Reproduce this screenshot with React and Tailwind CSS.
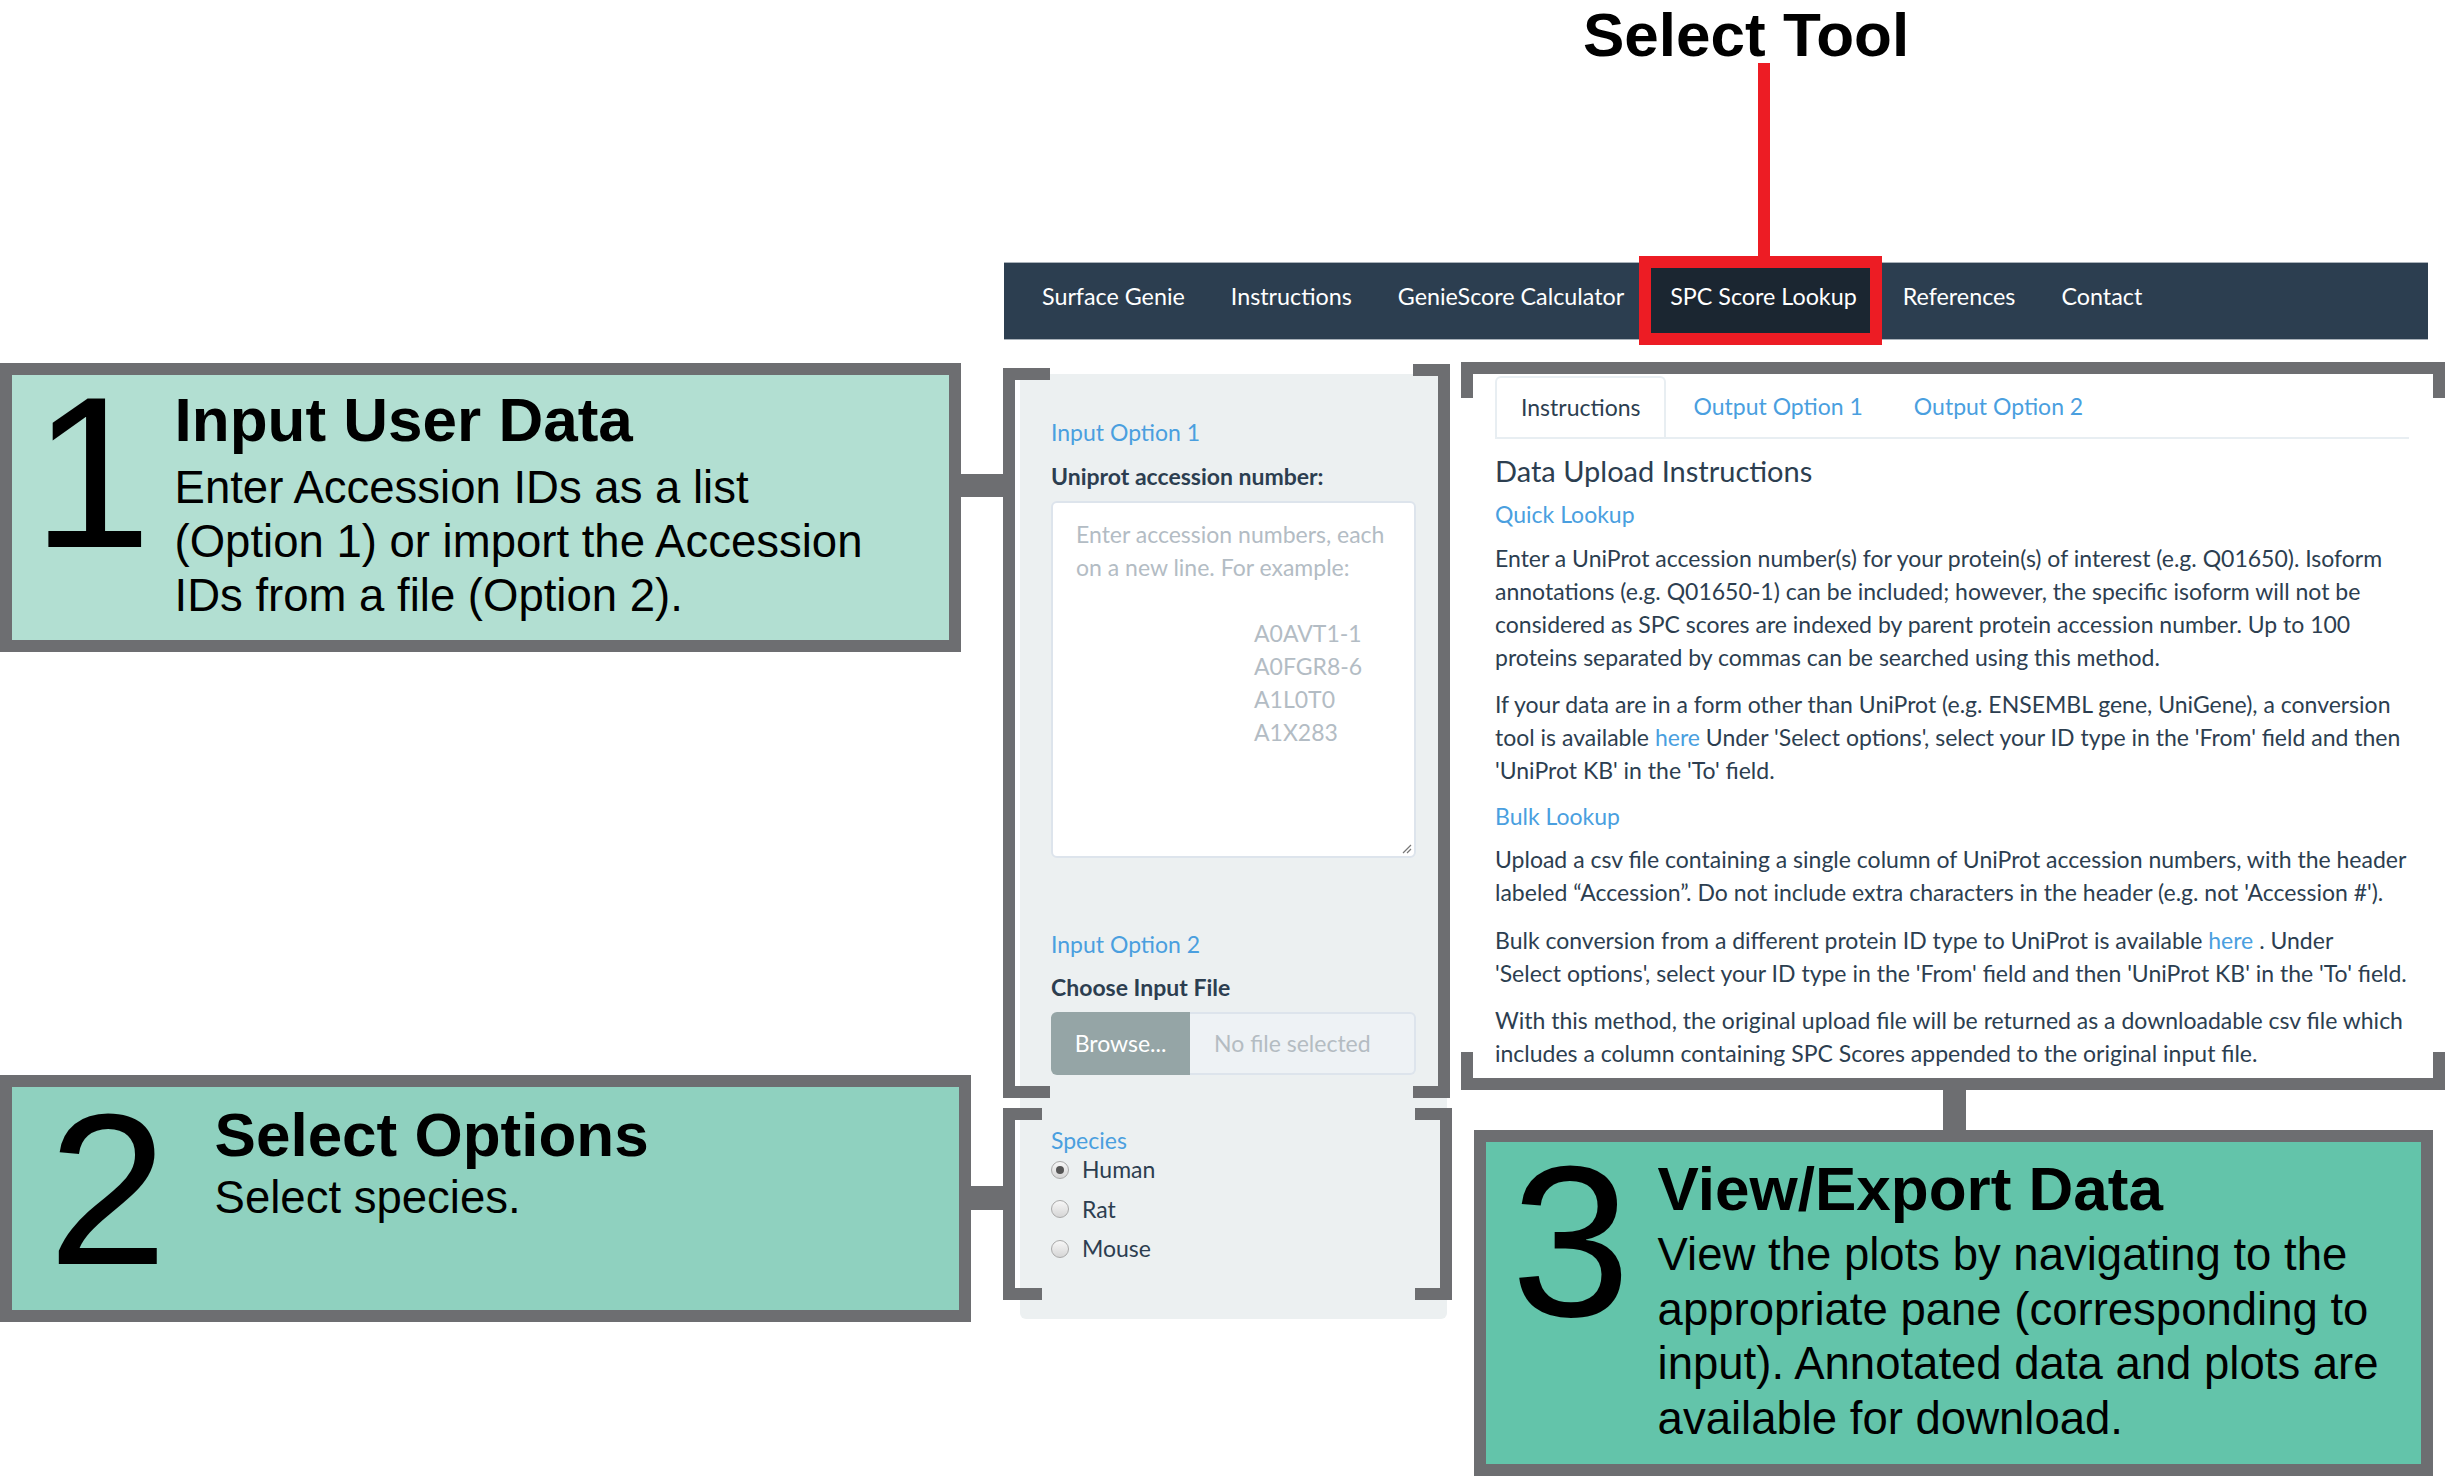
import React from 'react';

// Annotated figure: SPC Score Lookup tool with three callout steps

const navItems = ['Surface Genie', 'Instructions', 'GenieScore Calculator', 'SPC Score Lookup', 'References', 'Contact'];
const examples = ['A0AVT1-1', 'A0FGR8-6', 'A1L0T0', 'A1X283'];

export default function App() {
  return (
    <div className="relative w-[2445px] h-[1476px] overflow-hidden bg-white">
      {/* screenshot of the app */}
      <div className="absolute left-[1004px] top-[262px] w-[1424px] font-['Lato',sans-serif]">
        <Navbar />
        <div className="flex items-start mt-[34px]">
          <Sidebar />
          <MainPanel />
        </div>
      </div>

      {/* annotation layer */}
      <div className="absolute left-[1583px] top-0 text-[62px] leading-[70px] font-bold text-black font-['Liberation_Sans',Arial,sans-serif]">
        Select Tool
      </div>
      <div className="absolute left-[1758px] top-[63px] w-[12px] h-[193px] bg-[#ed1c24]" />
      <div className="absolute left-[1639px] top-[256px] w-[243px] h-[89px] border-[12px] border-[#ed1c24]" />

      {/* brackets */}
      <div className="absolute left-[1003px] top-[368px] w-[47px] h-[730px] border-[12px] border-r-0 border-[#6d6e71]" />
      <div className="absolute left-[1413px] top-[364px] w-[37px] h-[734px] border-[12px] border-l-0 border-[#6d6e71]" />
      <div className="absolute left-[1003px] top-[1108px] w-[39px] h-[192px] border-[12px] border-r-0 border-[#6d6e71]" />
      <div className="absolute left-[1415px] top-[1108px] w-[37px] h-[192px] border-[12px] border-l-0 border-[#6d6e71]" />
      <div className="absolute left-[1461px] top-[362px] w-[984px] h-[36px] border-[12px] border-b-0 border-[#6d6e71]" />
      <div className="absolute left-[1461px] top-[1052px] w-[984px] h-[38px] border-[12px] border-t-0 border-[#6d6e71]" />

      {/* connectors */}
      <div className="absolute left-[961px] top-[474px] w-[42px] h-[23px] bg-[#6d6e71]" />
      <div className="absolute left-[971px] top-[1186px] w-[32px] h-[24px] bg-[#6d6e71]" />
      <div className="absolute left-[1943px] top-[1090px] w-[23px] h-[40px] bg-[#6d6e71]" />

      {/* callouts */}
      <div className="absolute left-0 top-[363px] w-[961px] h-[289px] border-[12px] border-[#6d6e71] bg-[#b2dfd2] flex items-start font-['Liberation_Sans',Arial,sans-serif] text-black">
        <div className="ml-[20px] mt-[-10px] text-[215px] leading-none">1</div>
        <div className="ml-[23px] mt-[14px]">
          <div className="text-[62px] leading-none font-bold">Input User Data</div>
          <div className="mt-[10px] text-[45.5px] leading-[54px]">
            Enter Accession IDs as a list<br />
            (Option 1) or import the Accession<br />
            IDs from a file (Option 2).
          </div>
        </div>
      </div>

      <div className="absolute left-0 top-[1075px] w-[971px] h-[247px] border-[12px] border-[#6d6e71] bg-[#8fd1bf] flex items-start font-['Liberation_Sans',Arial,sans-serif] text-black">
        <div className="ml-[36px] mt-[-5px] text-[215px] leading-none">2</div>
        <div className="ml-[47px] mt-[17px]">
          <div className="text-[62px] leading-none font-bold">Select Options</div>
          <div className="mt-[5px] text-[45.5px] leading-[54px]">Select species.</div>
        </div>
      </div>

      <div className="absolute left-[1474px] top-[1130px] w-[959px] h-[346px] border-[12px] border-[#6d6e71] bg-[#63c4aa] flex items-start font-['Liberation_Sans',Arial,sans-serif] text-black">
        <div className="ml-[25px] mt-[-8px] text-[215px] leading-none">3</div>
        <div className="ml-[27px] mt-[16px]">
          <div className="text-[62px] leading-none font-bold">View/Export Data</div>
          <div className="mt-[8px] text-[45.5px] leading-[54.5px]">
            View the plots by navigating to the<br />
            appropriate pane (corresponding to<br />
            input). Annotated data and plots are<br />
            available for download.
          </div>
        </div>
      </div>
    </div>
  );
}

function Navbar() {
  return (
    <nav className="h-[78px] bg-[#2c3e50] border-y border-[#aab2ba] flex items-stretch pl-[15px]">
      {navItems.map((item) => (
        <a
          key={item}
          className={
            item === 'SPC Score Lookup'
              ? 'flex items-center px-[23px] pb-[10px] text-[23.3px] text-white bg-[#1b2631]'
              : 'flex items-center px-[23px] pb-[10px] text-[23.3px] text-white'
          }
        >
          {item}
        </a>
      ))}
    </nav>
  );
}

function Radio({ label, checked }) {
  return (
    <label className="flex items-center h-[39.5px] gap-[13px] text-[#2c3e50]">
      <span className="w-[18px] h-[18px] rounded-full border border-[#a9a9a9] bg-gradient-to-b from-[#f7f7f7] to-[#d6d6d6] flex items-center justify-center">
        {checked && <span className="w-[8px] h-[8px] rounded-full bg-[#555]" />}
      </span>
      {label}
    </label>
  );
}

function Sidebar() {
  return (
    <div className="ml-[16px] w-[427px] bg-[#ecf0f1] rounded-[6px] px-[31px] pt-[42px] pb-[50px] text-[23px] leading-[33px]">
      <div className="text-[#4a9fdf]">Input Option 1</div>
      <div className="mt-[11px] font-bold text-[#2c3e50]">Uniprot accession number:</div>
      <div className="relative mt-[8px] h-[357px] bg-white border-2 border-[#dde4ec] rounded-[6px] px-[23px] pt-[15px] text-[#b3bcc4]">
        <div>Enter accession numbers, each</div>
        <div>on a new line. For example:</div>
        <div className="h-[33px]" />
        {examples.map((ex) => (
          <div key={ex} className="pl-[178px]">{ex}</div>
        ))}
        <svg className="absolute right-[2px] bottom-[2px]" width="12" height="12" viewBox="0 0 12 12">
          <path d="M11 3 L3 11 M11 7 L7 11" stroke="#777" strokeWidth="1.2" />
        </svg>
      </div>

      <div className="mt-[70px] text-[#4a9fdf]">Input Option 2</div>
      <div className="mt-[10px] font-bold text-[#2c3e50]">Choose Input File</div>
      <div className="mt-[8px] flex h-[63px]">
        <div className="w-[139px] bg-[#95a5a6] rounded-l-[6px] flex items-center justify-center text-white">Browse...</div>
        <div className="flex-1 bg-[#eef2f5] border-2 border-l-0 border-[#dde4ec] rounded-r-[6px] flex items-center pl-[24px] text-[#b4bcc2]">
          No file selected
        </div>
      </div>

      <div className="mt-[55px] leading-[20px] text-[#4a9fdf]">Species</div>
      <Radio label="Human" checked />
      <Radio label="Rat" />
      <Radio label="Mouse" />
    </div>
  );
}

function MainPanel() {
  return (
    <div className="ml-[48px] w-[914px] text-[23px] leading-[33px] text-[#2c3e50]">
      <div className="mt-[2px] flex border-b-2 border-[#e8eef2]">
        <div className="h-[61px] px-[24px] flex items-center bg-white border-2 border-b-0 border-[#e8eef2] rounded-t-[6px] -mb-[2px]">
          Instructions
        </div>
        <div className="h-[61px] ml-[3px] px-[24px] flex items-center text-[#4a9fdf]">Output Option 1</div>
        <div className="h-[61px] ml-[3px] px-[24px] flex items-center text-[#4a9fdf]">Output Option 2</div>
      </div>

      <h4 className="mt-[16px] text-[29px] leading-[32px]">Data Upload Instructions</h4>
      <div className="mt-[11px] text-[#4a9fdf]">Quick Lookup</div>
      <p className="mt-[11px]">
        Enter a UniProt accession number(s) for your protein(s) of interest (e.g. Q01650). Isoform<br />
        annotations (e.g. Q01650-1) can be included; however, the specific isoform will not be<br />
        considered as SPC scores are indexed by parent protein accession number. Up to 100<br />
        proteins separated by commas can be searched using this method.
      </p>
      <p className="mt-[14px]">
        If your data are in a form other than UniProt (e.g. ENSEMBL gene, UniGene), a conversion<br />
        tool is available <span className="text-[#4a9fdf]">here</span> Under 'Select options', select your ID type in the 'From' field and then<br />
        'UniProt KB' in the 'To' field.
      </p>
      <div className="mt-[13px] text-[#4a9fdf]">Bulk Lookup</div>
      <p className="mt-[10px]">
        Upload a csv file containing a single column of UniProt accession numbers, with the header<br />
        labeled “Accession”. Do not include extra characters in the header (e.g. not 'Accession #').
      </p>
      <p className="mt-[15px]">
        Bulk conversion from a different protein ID type to UniProt is available <span className="text-[#4a9fdf]">here</span> . Under<br />
        'Select options', select your ID type in the 'From' field and then 'UniProt KB' in the 'To' field.
      </p>
      <p className="mt-[14px]">
        With this method, the original upload file will be returned as a downloadable csv file which<br />
        includes a column containing SPC Scores appended to the original input file.
      </p>
    </div>
  );
}
